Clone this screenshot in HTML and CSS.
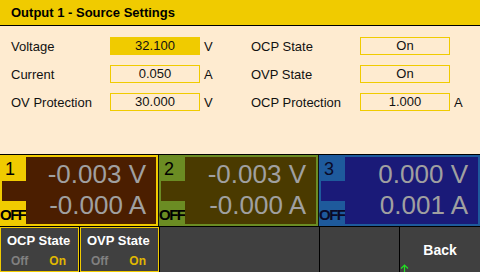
FILE: index.html
```html
<!DOCTYPE html>
<html>
<head>
<meta charset="utf-8">
<link rel="stylesheet" href="styles.css">
</head>
<body>
<div class="screen">
  <header class="title">Output 1 - Source Settings</header>
  <section class="settings">
    <div class="row">
      <span class="label">Voltage</span><span class="box active">32.100</span><span class="unit">V</span>
      <span class="label">OCP State</span><span class="box">On</span><span class="unit"></span>
    </div>
    <div class="row">
      <span class="label">Current</span><span class="box">0.050</span><span class="unit">A</span>
      <span class="label">OVP State</span><span class="box">On</span><span class="unit"></span>
    </div>
    <div class="row">
      <span class="label">OV Protection</span><span class="box">30.000</span><span class="unit">V</span>
      <span class="label">OCP Protection</span><span class="box">1.000</span><span class="unit">A</span>
    </div>
  </section>
  <section class="channels">
    <div class="ch ch1">
      <div class="tab"><span class="num">1</span><span class="mid"></span><span class="off">OFF</span></div>
      <div class="readout"><div class="val">-0.003 V</div><div class="val">-0.000 A</div></div>
    </div>
    <div class="ch ch2">
      <div class="tab"><span class="num">2</span><span class="mid"></span><span class="off">OFF</span></div>
      <div class="readout"><div class="val">-0.003 V</div><div class="val">-0.000 A</div></div>
    </div>
    <div class="ch ch3">
      <div class="tab"><span class="num">3</span><span class="mid"></span><span class="off">OFF</span></div>
      <div class="readout"><div class="val">0.000 V</div><div class="val">0.001 A</div></div>
    </div>
  </section>
  <nav class="softkeys">
    <div class="key toggle"><span class="kt">OCP State</span><span class="opts"><span class="o-off">Off</span><span class="o-on">On</span></span></div>
    <div class="key toggle"><span class="kt">OVP State</span><span class="opts"><span class="o-off">Off</span><span class="o-on">On</span></span></div>
    <div class="key"></div>
    <div class="key"></div>
    <div class="key back">Back
      <svg class="cursor" width="9" height="8" viewBox="0 0 9 8"><path d="M4.5 1V8M1 4.5L4.5 1L8 4.5" stroke="#22e022" stroke-width="1.2" fill="none"/></svg>
    </div>
  </nav>
</div>
</body>
</html>
```

FILE: styles.css
```css
* { box-sizing: border-box; }
html, body { margin: 0; padding: 0; }
body {
  width: 480px;
  height: 272px;
  overflow: hidden;
  font-family: "Liberation Sans", Arial, sans-serif;
  background: #000;
}
.screen {
  width: 480px;
  height: 272px;
  display: flex;
  flex-direction: column;
}
.title {
  height: 26px;
  background: #f0cb00;
  border-bottom: 1px solid #000;
  font-weight: bold;
  font-size: 13px;
  line-height: 25px;
  padding-left: 11px;
  color: #000;
}
.settings {
  height: 129px;
  background: #feebd0;
  border-bottom: 1px solid #000;
  padding-top: 11px;
  display: flex;
  flex-direction: column;
  gap: 10px;
}
.row {
  display: grid;
  grid-template-columns: 99px 90px 51px 109px 90px 30px;
  padding-left: 11px;
  height: 18px;
  align-items: center;
  font-size: 13px;
  color: #111;
}
.label { padding-top: 1px; }
.box {
  height: 18px;
  border: 1px solid #f0cb00;
  text-align: center;
  line-height: 16px;
}
.box.active { background: #f0cb00; }
.unit { padding-left: 4px; padding-top: 1px; }
.channels {
  height: 71px;
  display: grid;
  grid-template-columns: 159px 160px 161px;
  background: #111;
}
.ch {
  display: grid;
  grid-template-columns: 26px 1fr;
  margin-right: 1px;
}
.ch3 { margin-right: 0; }
.tab {
  display: flex;
  flex-direction: column;
}
.num {
  height: 26px;
  font-size: 18px;
  line-height: 24px;
  padding: 2px 0 0 5px;
  color: #000;
}
.mid { flex: 1; margin-left: 2px; }
.off {
  height: 25px;
  font-weight: bold;
  font-size: 15px;
  letter-spacing: -1.5px;
  line-height: 28px;
  color: #000;
}
.readout {
  margin: 2px 2px 2px 0;
  padding: 2px 10px 0 0;
  text-align: right;
  color: #a0a0a0;
  font-size: 26px;
  line-height: 31px;
}
.ch1 { background: #f0cb00; }
.ch1 .mid, .ch1 .readout { background: #4b1e00; }
.ch2 { background: #6b8c23; }
.ch2 .mid, .ch2 .readout { background: #4a3a00; }
.ch3 { background: #1e5a9c; }
.ch3 .mid, .ch3 .readout { background: #1a1a78; }
.ch3 .num, .ch3 .off { color: #0a0a28; }
.softkeys {
  height: 46px;
  padding-top: 1px;
  display: grid;
  grid-template-columns: 79px 79px 159px 79px 80px;
  gap: 1px;
  background: #000;
}
.key {
  background: #404040;
  color: #fff;
  font-weight: bold;
  position: relative;
}
.toggle {
  border: 1px solid #f0cb00;
  display: flex;
  flex-direction: column;
  padding: 5px 0 0 6px;
}
.kt { font-size: 13px; line-height: 16px; }
.opts {
  display: flex;
  gap: 21px;
  font-size: 12px;
  margin-top: 5px;
  padding-left: 4px;
}
.o-off { color: #808080; }
.o-on { color: #e0b800; }
.back {
  display: flex;
  align-items: center;
  justify-content: center;
  font-size: 14px;
}
.cursor {
  position: absolute;
  left: 0;
  bottom: 0;
}
```
